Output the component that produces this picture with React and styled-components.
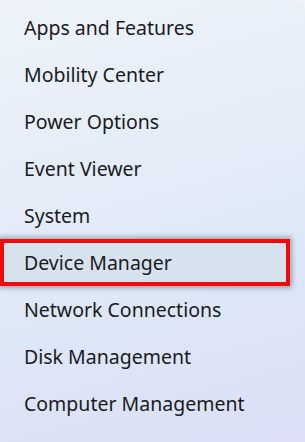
import React from 'react'
import styled, { createGlobalStyle } from 'styled-components'

const items = [
  'Apps and Features',
  'Mobility Center',
  'Power Options',
  'Event Viewer',
  'System',
  'Device Manager',
  'Network Connections',
  'Disk Management',
  'Computer Management',
  'Windows Terminal'
]

const GlobalStyle = createGlobalStyle`
  html, body {
    margin: 0;
    padding: 0;
    height: 100%;
    overflow: hidden;
    background: #f1f3f6;
  }
`

const Menu = styled.div`
  width: 305px;
  height: 442px;
  overflow: hidden;
  box-sizing: border-box;
  padding-top: 4px;
  border-radius: 10px 10px 0 0;
  background: linear-gradient(165deg, #eef3fa 0%, #e3ecf7 40%, #dde6f6 70%, #dcdff6 100%);
  font-family: "Noto Sans", "Open Sans", sans-serif;
`

const Item = styled.div`
  height: 47px;
  width: 290px;
  box-sizing: border-box;
  display: flex;
  align-items: center;
  padding-left: ${p => (p.selected ? '20px' : '24px')};
  font-size: 19.5px;
  color: #1b1b1b;
  border: ${p => (p.selected ? '4px solid #f00a0a' : 'none')};
  background: ${p => (p.selected ? '#d7e2ef' : 'transparent')};
  box-shadow: ${p => (p.selected ? '0 0 5px 2px rgba(70, 80, 90, 0.45)' : 'none')};
`

export default function App() {
  return (
    <>
      <GlobalStyle />
      <Menu>
        {items.map(label => (
          <Item key={label} selected={label === 'Device Manager'}>{label}</Item>
        ))}
      </Menu>
    </>
  )
}
